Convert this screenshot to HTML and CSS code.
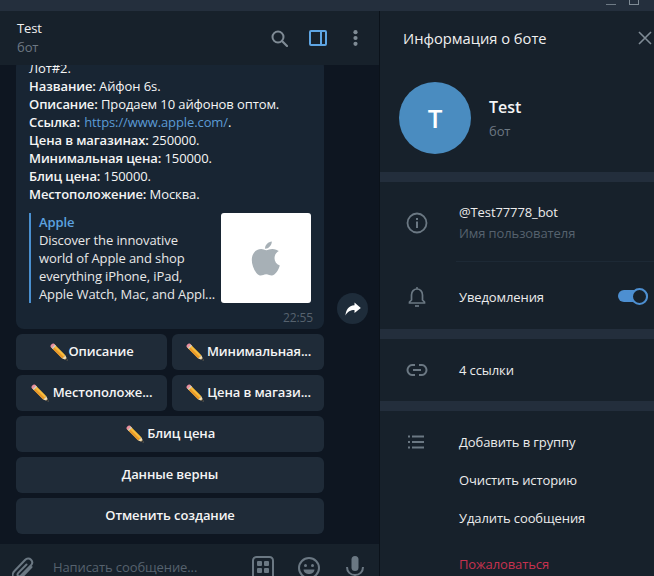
FILE: index.html
```html
<!DOCTYPE html>
<html lang="ru">
<head>
<meta charset="utf-8">
<title>Test</title>
<link rel="stylesheet" href="styles.css">
</head>
<body>
<svg class="defs" width="0" height="0" aria-hidden="true"><defs>
<symbol id="pencil" viewBox="0 0 18 18">
<path d="M4 0.800 L15.400 12.200 L12.200 15.400 L0.800 4 Z" fill="#f8bd3c"/>
<path d="M2.400 2.400 L13.800 13.800 L12.200 15.400 L0.800 4 Z" fill="#e8982a"/>
<path d="M0.800 4 C-0.600 2.600 2.600 -0.600 4 0.800 L5 1.800 L1.800 5 Z" fill="#e88fa0"/>
<path d="M5 1.800 L6 2.800 L2.800 6 L1.800 5 Z" fill="#c9ced3"/>
<path d="M15.400 12.200 L17.600 17.600 L12.200 15.400 Z" fill="#f4dcae"/>
<path d="M16.500 14.900 L17.600 17.600 L14.900 16.500 Z" fill="#38332c"/>
</symbol>
</defs></svg>
<div class="titlebar">
  <span class="win-min"></span><span class="win-max"></span>
</div>
<div class="app">
  <main class="chat">
    <header class="chat-head">
      <div class="chat-title">
        <div class="name">Test</div>
        <div class="sub">бот</div>
      </div>
      <div class="head-icons">
        <svg class="ic-search" width="17" height="17" viewBox="0 0 17 17"><circle cx="7" cy="7" r="5.500" fill="none" stroke="#7f8b95" stroke-width="2"/><path d="M11 11 L16 16" stroke="#7f8b95" stroke-width="2.200" stroke-linecap="round"/></svg>
        <svg class="ic-side" width="18" height="16" viewBox="0 0 18 16"><rect x="1" y="1" width="16" height="14" rx="1" fill="none" stroke="#5ea5e3" stroke-width="2"/><rect x="11" y="1" width="2" height="14" fill="#5ea5e3"/></svg>
        <svg class="ic-more" width="5" height="16" viewBox="0 0 5 16"><circle cx="2.500" cy="2.200" r="2.100" fill="#7f8b95"/><circle cx="2.500" cy="8" r="2.100" fill="#7f8b95"/><circle cx="2.500" cy="13.800" r="2.100" fill="#7f8b95"/></svg>
      </div>
    </header>
    <div class="history">
      <div class="msg-row">
        <article class="bubble">
          <p class="line">Лот#2.</p>
          <p class="line"><b>Название:</b> Айфон 6s.</p>
          <p class="line"><b>Описание:</b> Продаем 10 айфонов оптом.</p>
          <p class="line"><b>Ссылка:</b> <a>https://www.apple.com/</a>.</p>
          <p class="line"><b>Цена в магазинах:</b> 250000.</p>
          <p class="line"><b>Минимальная цена:</b> 150000.</p>
          <p class="line"><b>Блиц цена:</b> 150000.</p>
          <p class="line"><b>Местоположение:</b> Москва.</p>
          <div class="preview">
            <div class="preview-text">
              <div class="site">Apple</div>
              <div>Discover the innovative</div>
              <div>world of Apple and shop</div>
              <div>everything iPhone, iPad,</div>
              <div>Apple Watch, Mac, and Appl...</div>
            </div>
            <div class="thumb">
              <svg width="30" height="35" viewBox="0 0 30 35"><path fill="#a7b0b6" d="M15.400 9.200c-1.600 0-3.200-1.100-5.200-1.100C5 8.100 0.800 12.200 0.800 19c0 6.600 4.600 15.600 8.900 15.600 1.900 0 3.100-1.300 5.500-1.300 2.400 0 3.400 1.300 5.500 1.300 3.700 0 7-6.100 8.100-10-3.600-1.400-5.300-4.300-5.300-7.500 0-3 1.500-5.400 4.300-7.100C26.700 9.300 24 8 21.300 8c-2.500 0-4.300 1.200-5.900 1.200zM20.800 0.400c0.200 3.800-3.500 7.600-6.700 7.300C13.800 4 17.300 0.600 20.800 0.400z"/></svg>
            </div>
          </div>
          <div class="time">22:55</div>
        </article>
        <button class="share" aria-label="Переслать">
          <svg width="16" height="14" viewBox="0 0 16 14"><path fill="#fff" d="M9.500 0.500 L15.800 6 L9.500 11 V8 C5.500 8 2.500 9.500 0.500 13.500 C0.800 8 3.500 3.500 9.500 3.200 Z"/></svg>
        </button>
      </div>
      <div class="keyboard">
        <div class="kb-row">
          <button class="kb wide-l"><svg class="pen"><use href="#pencil"/></svg>Описание</button>
          <button class="kb wide-r"><svg class="pen"><use href="#pencil"/></svg> Минимальная...</button>
        </div>
        <div class="kb-row">
          <button class="kb wide-l"><svg class="pen"><use href="#pencil"/></svg> Местоположе...</button>
          <button class="kb wide-r"><svg class="pen"><use href="#pencil"/></svg> Цена в магази...</button>
        </div>
        <button class="kb"><svg class="pen"><use href="#pencil"/></svg> Блиц цена</button>
        <button class="kb">Данные верны</button>
        <button class="kb">Отменить создание</button>
      </div>
    </div>
    <footer class="composer">
      <svg class="ic-clip" width="22" height="24" viewBox="0 0 22 24"><path fill="none" stroke="#6b7883" stroke-width="2" stroke-linecap="round" d="M19.500 10 L9.500 20.500 C7 23 3.500 23 1.800 21 C0 19 0.500 16 2.500 14 L13 3 C14.800 1.200 17.300 1 19 2.700 C20.700 4.400 20.400 6.800 18.800 8.500 L9 18.500 C8 19.500 6.800 19.600 6 18.800 C5.200 18 5.400 16.800 6.300 15.900 L14.500 7.500"/></svg>
      <span class="placeholder">Написать сообщение...</span>
      <div class="comp-icons">
        <svg width="22" height="26" viewBox="0 0 22 26"><rect x="1" y="1" width="20" height="24" rx="3.500" fill="none" stroke="#6b7883" stroke-width="2"/><rect x="5" y="5" width="5" height="5" rx="1" fill="#6b7883"/><rect x="12" y="5" width="5" height="5" rx="1" fill="#6b7883"/><rect x="5" y="12" width="5" height="5" rx="1" fill="#6b7883"/><rect x="12" y="12" width="5" height="5" rx="1" fill="#6b7883"/></svg>
        <svg width="22" height="26" viewBox="0 0 22 26"><circle cx="11" cy="12" r="10" fill="none" stroke="#6b7883" stroke-width="2"/><circle cx="7.500" cy="9.500" r="1.500" fill="#6b7883"/><circle cx="14.500" cy="9.500" r="1.500" fill="#6b7883"/><path d="M5.500 13.500 H16.500 C16 17 13.500 18 11 18 C8.500 18 6 17 5.500 13.500 Z" fill="#6b7883"/></svg>
        <svg class="ic-mic" width="18" height="26" viewBox="0 0 18 26"><rect x="5.500" y="0" width="7" height="15" rx="3.500" fill="#6b7883"/><path d="M1 11 C1 16 4.500 19 9 19 C13.500 19 17 16 17 11" fill="none" stroke="#6b7883" stroke-width="2"/><path d="M9 19 V26" stroke="#6b7883" stroke-width="2"/></svg>
      </div>
    </footer>
  </main>
  <aside class="info">
    <header class="info-head">
      <span class="info-title">Информация о боте</span>
      <svg class="ic-close" width="14" height="14" viewBox="0 0 14 14"><path d="M1 1 L13 13 M13 1 L1 13" stroke="#7f8b95" stroke-width="1.600"/></svg>
    </header>
    <section class="profile">
      <div class="avatar">T</div>
      <div class="prof-text">
        <div class="prof-name">Test</div>
        <div class="sub">бот</div>
      </div>
    </section>
    <div class="sep"></div>
    <section class="details">
      <div class="row-user">
        <svg class="ic" width="22" height="22" viewBox="0 0 22 22"><circle cx="11" cy="11" r="9.500" fill="none" stroke="#6b7883" stroke-width="1.800"/><rect x="10" y="9.500" width="2" height="6.500" fill="#6b7883"/><rect x="10" y="6" width="2" height="2" fill="#6b7883"/></svg>
        <div class="user-text">
          <div class="val">@Test77778_bot</div>
          <div class="label">Имя пользователя</div>
        </div>
      </div>
      <div class="row-notify">
        <svg class="ic" width="22" height="22" viewBox="0 0 22 22"><path fill="none" stroke="#6b7883" stroke-width="1.700" d="M3.500 17 V16 L5.500 14 V9 C5.500 5.500 8 3 11 3 C14 3 16.500 5.500 16.500 9 V14 L18.500 16 V17 Z"/><path d="M9 20 H13" stroke="#6b7883" stroke-width="1.700"/><path d="M11 1 V3" stroke="#6b7883" stroke-width="1.500"/></svg>
        <span class="val grow">Уведомления</span>
        <span class="toggle"><span class="knob"></span></span>
      </div>
    </section>
    <div class="sep"></div>
    <section class="links">
      <svg class="ic" width="22" height="14" viewBox="0 0 22 14"><path fill="none" stroke="#6b7883" stroke-width="2" d="M9 2 H6 C3.500 2 1.500 4.500 1.500 7 C1.500 9.500 3.500 12 6 12 H9 M13 2 H16 C18.500 2 20.500 4.500 20.500 7 C20.500 9.500 18.500 12 16 12 H13"/><path d="M7 7 H15" stroke="#6b7883" stroke-width="2"/></svg>
      <span class="val">4 ссылки</span>
    </section>
    <div class="sep"></div>
    <section class="actions">
      <div class="act act-first">
        <svg class="ic" width="22" height="14" viewBox="0 0 22 14"><path d="M6 1.500 H18 M6 7 H18 M6 12.500 H18" stroke="#6b7883" stroke-width="1.800"/><path d="M2 1.500 H4 M2 7 H4 M2 12.500 H4" stroke="#6b7883" stroke-width="1.800"/></svg>
        <span class="val">Добавить в группу</span>
      </div>
      <div class="act"><span class="val">Очистить историю</span></div>
      <div class="act"><span class="val">Удалить сообщения</span></div>
      <div class="act act-danger"><span class="danger">Пожаловаться</span></div>
    </section>
  </aside>
</div>
</body>
</html>
```
FILE: styles.css
```css
* { box-sizing: border-box; }
html, body { margin: 0; padding: 0; width: 654px; height: 576px; overflow: hidden; }
body { background: #17212b; color: #f5f5f5; font: 13px/18px "Open Sans", "Noto Sans", sans-serif; letter-spacing: -0.1px; display: flex; flex-direction: column; }
.defs { position: absolute; }
button { font: inherit; color: inherit; border: 0; letter-spacing: inherit; }
p { margin: 0; }
b { font-weight: 600; }

.titlebar { height: 11px; flex: none; background: #242f3d; display: flex; justify-content: flex-end; gap: 13px; padding-right: 15px; }
.win-min { width: 10px; height: 1px; margin-top: 4px; background: #6e7a85; }
.win-max { width: 10px; height: 5px; border: 1px solid #7f8b95; border-top: 0; }

.app { flex: 1; display: flex; min-height: 0; }
.chat { width: 380px; flex: none; display: flex; flex-direction: column; border-right: 1px solid #0b121a; background: #0e1621; }
.chat-head { height: 54px; flex: none; background: #17212b; display: flex; align-items: center; justify-content: space-between; padding: 0 21px 0 17px; position: relative; z-index: 1; }
.name { line-height: 17px; color: #f0f0f0; }
.sub { color: #6d7883; line-height: 20px; }
.head-icons { display: flex; align-items: center; }
.ic-search { margin-right: 21px; }
.ic-side { margin-right: 26px; }

.history { flex: 1; min-height: 0; overflow: hidden; display: flex; flex-direction: column; justify-content: flex-end; padding: 0 0 10px 16px; }
.msg-row { display: flex; align-items: flex-end; flex: none; }
.bubble { width: 308px; flex: none; background: #182533; border-radius: 8px; padding: 0 13px 2px 13px; color: #f5f5f5; }
.line a { color: #5b9bd5; margin-left: 1px; }
.preview { display: flex; justify-content: space-between; margin-top: 10px; border-left: 2px solid #4a90d0; padding-left: 8px; height: 90px; }
.preview-text { white-space: nowrap; color: #e8e8e8; }
.site { color: #5ca2e0; font-weight: 600; }
.thumb { width: 90px; height: 90px; background: #fff; border-radius: 3px; display: flex; align-items: center; justify-content: center; flex: none; }
.time { text-align: right; color: #56626e; font-size: 12px; line-height: 18px; margin-top: 6px; margin-right: -2px; }
.share { width: 31px; height: 31px; border-radius: 50%; background: #1e2c3a; margin: 0 0 5px 13px; padding: 0; display: flex; align-items: center; justify-content: center; flex: none; }

.keyboard { width: 308px; flex: none; display: flex; flex-direction: column; gap: 5px; margin-top: 5px; }
.kb-row { display: flex; gap: 5px; }
.kb { height: 36px; background: #1f2b38; border-radius: 6px; font-weight: 600; color: #f5f5f5; padding: 0 0 2px; display: flex; align-items: center; justify-content: center; white-space: pre; width: 100%; }
.wide-l { width: 151px; flex: none; }
.wide-r { width: 152px; flex: none; }
.pen { width: 18px; height: 18px; flex: none; margin: 2px 0 0 1px; }

.composer { height: 32px; flex: none; background: #17212b; display: flex; align-items: flex-start; padding: 12px 15px 0 12px; overflow: hidden; }
.ic-clip { flex: none; margin-top: 1px; }
.placeholder { color: #56626e; margin-left: 19px; flex: 1; margin-top: 2px; }
.comp-icons { display: flex; gap: 24px; align-items: flex-start; }
.ic-mic { margin-left: 2px; }

.info { flex: 1; min-width: 0; display: flex; flex-direction: column; background: #17212b; }
.info-head { height: 54px; flex: none; display: flex; align-items: center; justify-content: space-between; padding: 0 2px 0 23px; }
.info-title { font-size: 14.700px; letter-spacing: 0; color: #f0f0f0; }
.profile { height: 107px; flex: none; display: flex; padding: 17px 0 0 19px; }
.avatar { width: 72px; height: 72px; border-radius: 50%; background: #4a8cc0; color: #fff; font-size: 26px; font-weight: 600; display: flex; align-items: center; justify-content: center; }
.prof-text { margin-left: 18px; padding-top: 15px; }
.prof-name { font-size: 16px; letter-spacing: 0; font-weight: 600; line-height: 20px; margin-bottom: 4px; }
.sep { height: 10px; flex: none; background: #232e3c; }
.ic { flex: none; display: block; }
.details { height: 147px; flex: none; display: flex; flex-direction: column; }
.row-user { height: 85px; display: flex; align-items: center; padding: 0 0 4px 26px; position: relative; }
.row-user::after { content: ""; position: absolute; left: 76px; right: 0; bottom: 5px; height: 1px; background: #1d2935; }
.user-text { margin-left: 31px; }
.val { color: #ececec; }
.label { color: #56626e; margin-top: 3px; }
.row-notify { flex: 1; display: flex; align-items: center; padding: 0 6px 2px 26px; }
.grow { flex: 1; margin-left: 31px; }
.toggle { width: 30px; height: 12px; border-radius: 6px; background: #4d8fd1; position: relative; margin-bottom: 2px; }
.knob { position: absolute; right: 0; top: -2.500px; width: 17px; height: 17px; border-radius: 50%; background: #17212b; border: 2px solid #4d8fd1; }
.links { height: 62px; flex: none; display: flex; align-items: center; padding-left: 26px; gap: 31px; }
.actions { flex: 1; padding-top: 12px; display: flex; flex-direction: column; }
.act { height: 38px; padding-left: 79px; display: flex; align-items: center; flex: none; }
.act-first { padding-left: 26px; gap: 31px; }
.act-danger { margin-top: 8px; }
.danger { color: #c8324f; }
```
